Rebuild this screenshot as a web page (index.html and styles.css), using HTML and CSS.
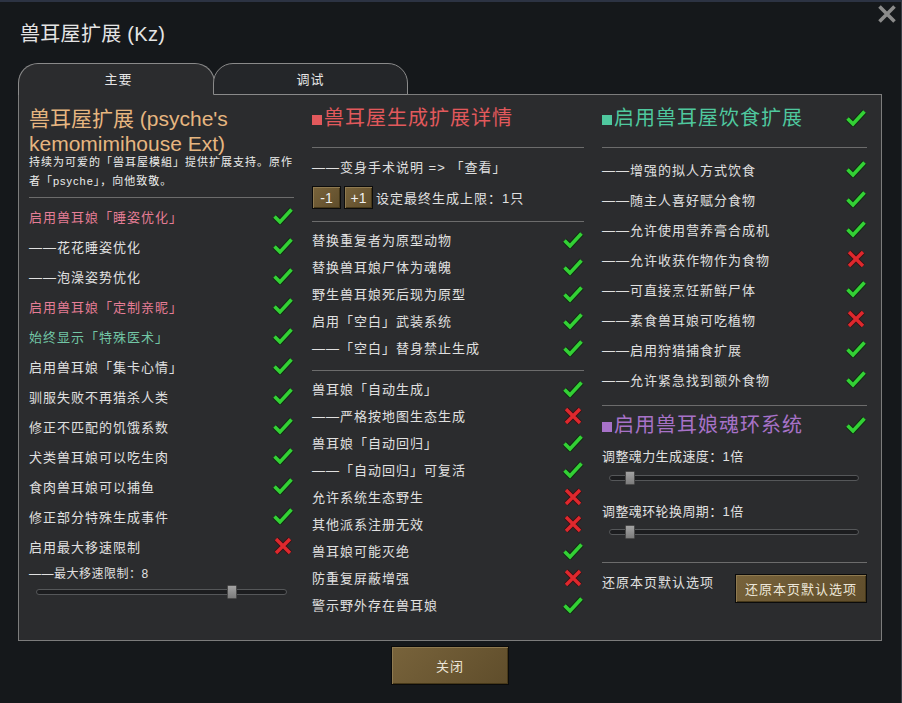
FILE: index.html
```html
<!DOCTYPE html>
<html lang="zh-CN">
<head>
<meta charset="utf-8">
<title>兽耳屋扩展 (Kz)</title>
<link rel="stylesheet" href="styles.css">
</head>
<body>
<svg class="defs" width="0" height="0" aria-hidden="true">
  <symbol id="ck" viewBox="0 0 22 18">
    <path d="M2.5 9.5 L8 15 L19.5 2.5" fill="none" stroke="#0d2e0e" stroke-width="5.6" stroke-linejoin="miter" opacity="0.85"/>
    <path d="M2.5 9.5 L8 15 L19.5 2.5" fill="none" stroke="#33d135" stroke-width="3.6" stroke-linejoin="miter"/>
  </symbol>
  <symbol id="cx" viewBox="0 0 20 20">
    <path d="M3 3 L17 17 M17 3 L3 17" fill="none" stroke="#3d0c0d" stroke-width="5.2" opacity="0.85"/>
    <path d="M3 3 L17 17 M17 3 L3 17" fill="none" stroke="#de282d" stroke-width="3.4"/>
  </symbol>
</svg>
<div class="window">
  <h1 class="title">兽耳屋扩展 (Kz)</h1>
  <button class="close-x" aria-label="close">
    <svg width="20" height="20" viewBox="0 0 20 20"><path d="M2.5 2.5 L17.5 17.5 M17.5 2.5 L2.5 17.5" stroke="#8b8b8b" stroke-width="3.6" fill="none"/></svg>
  </button>
  <div class="tabs">
    <div class="tab active">主要</div>
    <div class="tab inactive">调试</div>
  </div>
  <div class="panel">
    <div class="col col-left">
      <div class="head-gold">兽耳屋扩展 (psyche's kemomimihouse Ext)</div>
      <div class="desc">持续为可爱的「兽耳屋模組」提供扩展支持。原作<br>者「psyche」，向他致敬。</div>
      <div class="sep sep-left"></div>
      <div class="rows rows-30">
        <div class="row"><span class="pink">启用兽耳娘「睡姿优化」</span><svg class="ic-ck"><use href="#ck"/></svg></div>
        <div class="row"><span>——花花睡姿优化</span><svg class="ic-ck"><use href="#ck"/></svg></div>
        <div class="row"><span>——泡澡姿势优化</span><svg class="ic-ck"><use href="#ck"/></svg></div>
        <div class="row"><span class="pink">启用兽耳娘「定制亲昵」</span><svg class="ic-ck"><use href="#ck"/></svg></div>
        <div class="row"><span class="teal">始终显示「特殊医术」</span><svg class="ic-ck"><use href="#ck"/></svg></div>
        <div class="row"><span>启用兽耳娘「集卡心情」</span><svg class="ic-ck"><use href="#ck"/></svg></div>
        <div class="row"><span>驯服失败不再猎杀人类</span><svg class="ic-ck"><use href="#ck"/></svg></div>
        <div class="row"><span>修正不匹配的饥饿系数</span><svg class="ic-ck"><use href="#ck"/></svg></div>
        <div class="row"><span>犬类兽耳娘可以吃生肉</span><svg class="ic-ck"><use href="#ck"/></svg></div>
        <div class="row"><span>食肉兽耳娘可以捕鱼</span><svg class="ic-ck"><use href="#ck"/></svg></div>
        <div class="row"><span>修正部分特殊生成事件</span><svg class="ic-ck"><use href="#ck"/></svg></div>
        <div class="row"><span>启用最大移速限制</span><svg class="ic-cx"><use href="#cx"/></svg></div>
      </div>
      <div class="small-label">——最大移速限制：8</div>
      <div class="slider slider-left"><div class="track"></div><div class="thumb" style="left: 76%"></div></div>
    </div>

    <div class="col col-mid">
      <div class="head red"><span class="sq"></span>兽耳屋生成扩展详情</div>
      <div class="sep sep-head"></div>
      <div class="line line-first">——变身手术说明 =&gt; 「查看」</div>
      <div class="counter">
        <button class="btn btn-small">-1</button>
        <button class="btn btn-small">+1</button>
        <span class="counter-text">设定最终生成上限：1只</span>
      </div>
      <div class="sep sep-mid1"></div>
      <div class="rows rows-27 group1">
        <div class="row"><span>替换重复者为原型动物</span><svg class="ic-ck"><use href="#ck"/></svg></div>
        <div class="row"><span>替换兽耳娘尸体为魂魄</span><svg class="ic-ck"><use href="#ck"/></svg></div>
        <div class="row"><span>野生兽耳娘死后现为原型</span><svg class="ic-ck"><use href="#ck"/></svg></div>
        <div class="row"><span>启用「空白」武装系统</span><svg class="ic-ck"><use href="#ck"/></svg></div>
        <div class="row"><span>——「空白」替身禁止生成</span><svg class="ic-ck"><use href="#ck"/></svg></div>
      </div>
      <div class="sep sep-mid2"></div>
      <div class="rows rows-27 group2">
        <div class="row"><span>兽耳娘「自动生成」</span><svg class="ic-ck"><use href="#ck"/></svg></div>
        <div class="row"><span>——严格按地图生态生成</span><svg class="ic-cx"><use href="#cx"/></svg></div>
        <div class="row"><span>兽耳娘「自动回归」</span><svg class="ic-ck"><use href="#ck"/></svg></div>
        <div class="row"><span>——「自动回归」可复活</span><svg class="ic-ck"><use href="#ck"/></svg></div>
        <div class="row"><span>允许系统生态野生</span><svg class="ic-cx"><use href="#cx"/></svg></div>
        <div class="row"><span>其他派系注册无效</span><svg class="ic-cx"><use href="#cx"/></svg></div>
        <div class="row"><span>兽耳娘可能灭绝</span><svg class="ic-ck"><use href="#ck"/></svg></div>
        <div class="row"><span>防重复屏蔽增强</span><svg class="ic-cx"><use href="#cx"/></svg></div>
        <div class="row"><span>警示野外存在兽耳娘</span><svg class="ic-ck"><use href="#ck"/></svg></div>
      </div>
    </div>

    <div class="col col-right">
      <div class="head-row"><span class="head green"><span class="sq"></span>启用兽耳屋饮食扩展</span><svg class="ic-ck"><use href="#ck"/></svg></div>
      <div class="sep sep-head"></div>
      <div class="rows rows-30 food">
        <div class="row"><span>——增强的拟人方式饮食</span><svg class="ic-ck"><use href="#ck"/></svg></div>
        <div class="row"><span>——随主人喜好赋分食物</span><svg class="ic-ck"><use href="#ck"/></svg></div>
        <div class="row"><span>——允许使用营养膏合成机</span><svg class="ic-ck"><use href="#ck"/></svg></div>
        <div class="row"><span>——允许收获作物作为食物</span><svg class="ic-cx"><use href="#cx"/></svg></div>
        <div class="row"><span>——可直接烹饪新鲜尸体</span><svg class="ic-ck"><use href="#ck"/></svg></div>
        <div class="row"><span>——素食兽耳娘可吃植物</span><svg class="ic-cx"><use href="#cx"/></svg></div>
        <div class="row"><span>——启用狩猎捕食扩展</span><svg class="ic-ck"><use href="#ck"/></svg></div>
        <div class="row"><span>——允许紧急找到额外食物</span><svg class="ic-ck"><use href="#ck"/></svg></div>
      </div>
      <div class="sep sep-r1"></div>
      <div class="head-row head-row2"><span class="head purple"><span class="sq"></span>启用兽耳娘魂环系统</span><svg class="ic-ck"><use href="#ck"/></svg></div>
      <div class="line slabel1">调整魂力生成速度：1倍</div>
      <div class="slider slider-right s1"><div class="track"></div><div class="thumb" style="left: 6.4%"></div></div>
      <div class="line slabel2">调整魂环轮换周期：1倍</div>
      <div class="slider slider-right s2"><div class="track"></div><div class="thumb" style="left: 6.4%"></div></div>
      <div class="sep sep-r2"></div>
      <div class="reset-row">
        <span class="reset-text">还原本页默认选项</span>
        <button class="btn btn-reset">还原本页默认选项</button>
      </div>
    </div>
  </div>
  <div class="footer">
    <button class="btn btn-close">关闭</button>
  </div>
</div>
</body>
</html>
```

FILE: styles.css
```css
* { box-sizing: border-box; }
html, body { margin: 0; padding: 0; }
body {
  width: 902px;
  height: 703px;
  overflow: hidden;
  background: #15181b;
  font-family: "Liberation Sans", "Noto Sans CJK SC", sans-serif;
  color: #e0e0e0;
}
.defs { display: block; width: 0; height: 0; overflow: hidden; }

.window {
  position: relative;
  width: 902px;
  height: 703px;
  padding-left: 18px;
  border-top: 2px solid #2c3343;
  border-right: 1px solid #3a3e46;
  display: flex;
  flex-direction: column;
  background: #15181b;
}
.title {
  margin: 20px 0 0 2px;
  font-size: 20px;
  line-height: 24px;
  font-weight: normal;
  letter-spacing: 0.3px;
  color: #e4e4e4;
}
.close-x {
  position: absolute;
  top: 2px;
  right: 4px;
  width: 20px;
  height: 20px;
  padding: 0;
  border: none;
  background: none;
}
.close-x svg { display: block; }

.tabs {
  display: flex;
  margin-top: 17px;
  height: 32px;
  margin-bottom: -1px;
  position: relative;
  z-index: 1;
}
.tab {
  height: 32px;
  border: 1px solid #8a8a8a;
  border-bottom: none;
  border-radius: 20px 20px 0 0;
  display: flex;
  align-items: center;
  justify-content: center;
  font-size: 13px;
  letter-spacing: 1px;
  color: #e6e6e6;
  padding-bottom: 2px;
}
.tab.active { width: 197px; background: #2b2c2e; padding-left: 4px; }
.tab.inactive {
  width: 195px;
  margin-left: -2px;
  background: #242629;
  border-bottom: 1px solid #8a8a8a;
}

.panel {
  width: 864px;
  height: 547px;
  border: 1px solid #7c7c7c;
  background: #2b2c2e;
  padding: 11px 14px 0 10px;
  display: grid;
  grid-template-columns: 265px 272px 265px;
  column-gap: 18px;
  align-items: start;
}
.col { display: flex; flex-direction: column; min-width: 0; }

.sep { height: 1px; background: #6c6c6c; }

.head-gold {
  font-size: 21px;
  line-height: 25px;
  color: #e6b680;
}
.desc {
  margin-top: -3px;
  font-size: 11px;
  line-height: 19px;
  letter-spacing: 1px;
  white-space: nowrap;
  color: #ececec;
}
.sep-left { margin-top: 6px; margin-bottom: 3px; }

.rows { display: flex; flex-direction: column; }
.row {
  display: flex;
  align-items: center;
  justify-content: space-between;
  font-size: 13px;
  letter-spacing: 1px;
  white-space: nowrap;
  color: #e0e0e0;
}
.rows-30 .row { height: 30px; }
.rows-27 .row { height: 27px; }
.pink { color: #e57d95; }
.teal { color: #72c6a5; }

.ic-ck { width: 22px; height: 18px; flex: none; }
.ic-cx { width: 20px; height: 20px; flex: none; margin-right: 1px; }

.small-label {
  margin-top: 4px;
  font-size: 12px;
  line-height: 18px;
  letter-spacing: 0.5px;
}

.slider { position: relative; height: 12px; }
.slider .track {
  position: absolute;
  left: 0; right: 0; top: 3px;
  height: 6px;
  border-radius: 3px;
  background: #1c1d1f;
  border: 1px solid #555759;
}
.slider .thumb {
  position: absolute;
  top: -1px;
  width: 10px;
  height: 14px;
  background: linear-gradient(#a3a3a3, #7c7c7c);
  border: 1px solid #4a4a4a;
  border-radius: 1px;
}
.slider-left { margin: 3px 0 0 7px; width: 251px; }

.head {
  font-size: 20px;
  line-height: 24px;
  letter-spacing: 1px;
  white-space: nowrap;
}
.sq {
  display: inline-block;
  width: 10px;
  height: 10px;
  background: currentColor;
  margin-right: 2px;
}
.red { color: #e2595c; }
.green { color: #4fc89e; }
.purple { color: #a772c8; }
.sep-head { margin-top: 17px; }

.line {
  font-size: 13px;
  line-height: 20px;
  letter-spacing: 1px;
  white-space: nowrap;
}
.line-first { margin-top: 10px; }

.counter {
  display: flex;
  align-items: center;
  margin-top: 8px;
  height: 23px;
}
.btn {
  font-family: "Liberation Sans", "Noto Sans CJK SC", sans-serif;
  background: linear-gradient(135deg, #78633b, #5f4d2b);
  border: 1px solid #0b0b0b;
  box-shadow: inset 1px 1px 0 #8f7a50, inset -1px -1px 0 #463819;
  color: #ece6d8;
  padding: 0;
  cursor: pointer;
}
.btn-small {
  width: 29px;
  height: 23px;
  font-size: 14px;
  margin-right: 3px;
  color: #f0f0f0;
}
.counter-text {
  margin-left: 0;
  font-size: 13px;
  letter-spacing: 1px;
  white-space: nowrap;
}
.sep-mid1 { margin-top: 12px; }
.group1 { margin-top: 4px; }
.sep-mid2 { margin-top: 9px; }
.group2 { margin-top: 4px; }

.head-row {
  display: flex;
  align-items: center;
  justify-content: space-between;
  height: 24px;
}
.food { margin-top: 6px; }
.sep-r1 { margin-top: 11px; }
.head-row2 { margin-top: 7px; }
.slabel1 { margin-top: 10px; letter-spacing: 0.4px; }
.slider-right { margin-left: 7px; width: 250px; }
.s1 { margin-top: 5px; }
.slabel2 { margin-top: 18px; letter-spacing: 0.4px; }
.s2 { margin-top: 4px; }
.sep-r2 { margin-top: 24px; }
.reset-row {
  display: flex;
  justify-content: space-between;
  align-items: flex-start;
  margin-top: 11px;
}
.reset-text {
  margin-top: -1px;
  font-size: 13px;
  line-height: 20px;
  letter-spacing: 1px;
}
.btn-reset {
  width: 132px;
  height: 29px;
  font-size: 13px;
  letter-spacing: 1px;
}

.footer {
  width: 864px;
  display: flex;
  justify-content: center;
  margin-top: 5px;
}
.btn-close {
  width: 118px;
  height: 39px;
  font-size: 13px;
  letter-spacing: 1px;
}
```
